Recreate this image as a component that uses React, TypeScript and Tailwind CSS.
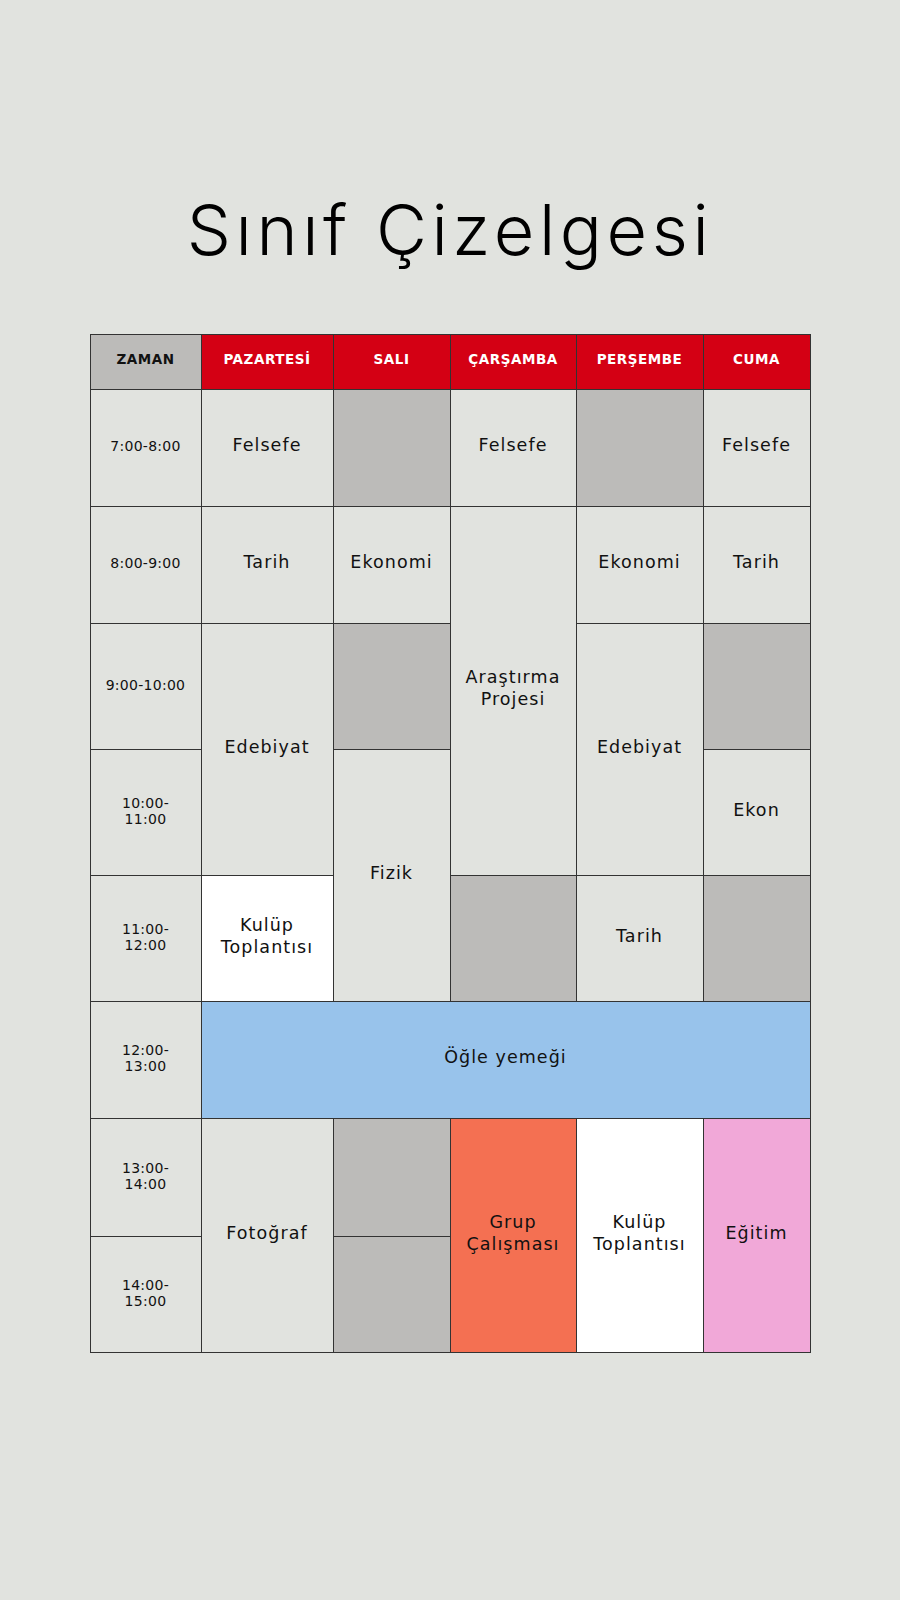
const days = ["PAZARTESİ", "SALI", "ÇARŞAMBA", "PERŞEMBE", "CUMA"];

const Cell = ({ className = "", children }: { className?: string; children?: React.ReactNode }) => (
  <div className={`flex items-center justify-center text-center px-2 pb-[6px] text-[17.5px] leading-[22px] tracking-[0.06em] text-[#111] ${className}`}>
    {children}
  </div>
);

const Time = ({ className = "", children }: { className?: string; children?: React.ReactNode }) => (
  <div className={`flex items-center justify-center text-center pb-[4px] bg-[#e1e3df] text-[14px] leading-[16px] tracking-[0.02em] text-[#111] ${className}`}>
    {children}
  </div>
);

export default function App() {
  return (
    <div className="min-h-screen bg-[#e1e3df] pt-[195px] pb-[200px] font-['DejaVu_Sans',sans-serif]">
      {/* Title */}
      <h1 className="text-center font-['Inter',sans-serif] font-light text-[70px] leading-[70px] tracking-[0.065em] text-black">
        Sınıf Çizelgesi
      </h1>

      {/* Timetable */}
      <div className="mt-[69px] mx-auto w-[721px] grid grid-cols-[110px_131px_116px_125px_126px_106px] grid-rows-[54px_116px_116px_125px_125px_125px_116px_117px_115px] gap-px p-px bg-[#333]">
        {/* Header */}
        <div className="col-start-1 row-start-1 flex items-center justify-center pb-[5px] bg-[#bcbbb9] font-bold text-[13.5px] tracking-[0.04em] text-[#111]">
          ZAMAN
        </div>
        {days.map((d, i) => (
          <div
            key={d}
            className={`row-start-1 flex items-center justify-center pb-[5px] bg-[#d40014] font-bold text-[13.5px] tracking-[0.04em] text-white ${
              ["col-start-2", "col-start-3", "col-start-4", "col-start-5", "col-start-6"][i]
            }`}
          >
            {d}
          </div>
        ))}

        {/* Time column */}
        <Time className="col-start-1 row-start-2">7:00-8:00</Time>
        <Time className="col-start-1 row-start-3">8:00-9:00</Time>
        <Time className="col-start-1 row-start-4">9:00-10:00</Time>
        <Time className="col-start-1 row-start-5">10:00-<br />11:00</Time>
        <Time className="col-start-1 row-start-6">11:00-<br />12:00</Time>
        <Time className="col-start-1 row-start-7">12:00-<br />13:00</Time>
        <Time className="col-start-1 row-start-8">13:00-<br />14:00</Time>
        <Time className="col-start-1 row-start-9">14:00-<br />15:00</Time>

        {/* 7:00-8:00 */}
        <Cell className="col-start-2 row-start-2 bg-[#e1e3df]">Felsefe</Cell>
        <Cell className="col-start-3 row-start-2 bg-[#bcbbb9]" />
        <Cell className="col-start-4 row-start-2 bg-[#e1e3df]">Felsefe</Cell>
        <Cell className="col-start-5 row-start-2 bg-[#bcbbb9]" />
        <Cell className="col-start-6 row-start-2 bg-[#e1e3df]">Felsefe</Cell>

        {/* 8:00-9:00 */}
        <Cell className="col-start-2 row-start-3 bg-[#e1e3df]">Tarih</Cell>
        <Cell className="col-start-3 row-start-3 bg-[#e1e3df]">Ekonomi</Cell>
        <Cell className="col-start-4 row-start-3 row-span-3 bg-[#e1e3df]">Araştırma<br />Projesi</Cell>
        <Cell className="col-start-5 row-start-3 bg-[#e1e3df]">Ekonomi</Cell>
        <Cell className="col-start-6 row-start-3 bg-[#e1e3df]">Tarih</Cell>

        {/* 9:00-11:00 */}
        <Cell className="col-start-2 row-start-4 row-span-2 bg-[#e1e3df]">Edebiyat</Cell>
        <Cell className="col-start-3 row-start-4 bg-[#bcbbb9]" />
        <Cell className="col-start-5 row-start-4 row-span-2 bg-[#e1e3df]">Edebiyat</Cell>
        <Cell className="col-start-6 row-start-4 bg-[#bcbbb9]" />
        <Cell className="col-start-3 row-start-5 row-span-2 bg-[#e1e3df]">Fizik</Cell>
        <Cell className="col-start-6 row-start-5 bg-[#e1e3df]">Ekon</Cell>

        {/* 11:00-12:00 */}
        <Cell className="col-start-2 row-start-6 bg-white">Kulüp<br />Toplantısı</Cell>
        <Cell className="col-start-4 row-start-6 bg-[#bcbbb9]" />
        <Cell className="col-start-5 row-start-6 bg-[#e1e3df]">Tarih</Cell>
        <Cell className="col-start-6 row-start-6 bg-[#bcbbb9]" />

        {/* Lunch */}
        <Cell className="col-start-2 col-span-5 row-start-7 bg-[#98c3eb]">Öğle yemeği</Cell>

        {/* 13:00-15:00 */}
        <Cell className="col-start-2 row-start-8 row-span-2 bg-[#e1e3df]">Fotoğraf</Cell>
        <Cell className="col-start-3 row-start-8 bg-[#bcbbb9]" />
        <Cell className="col-start-3 row-start-9 bg-[#bcbbb9]" />
        <Cell className="col-start-4 row-start-8 row-span-2 bg-[#f47052]">Grup<br />Çalışması</Cell>
        <Cell className="col-start-5 row-start-8 row-span-2 bg-white">Kulüp<br />Toplantısı</Cell>
        <Cell className="col-start-6 row-start-8 row-span-2 bg-[#f1a8d8]">Eğitim</Cell>
      </div>
    </div>
  );
}
